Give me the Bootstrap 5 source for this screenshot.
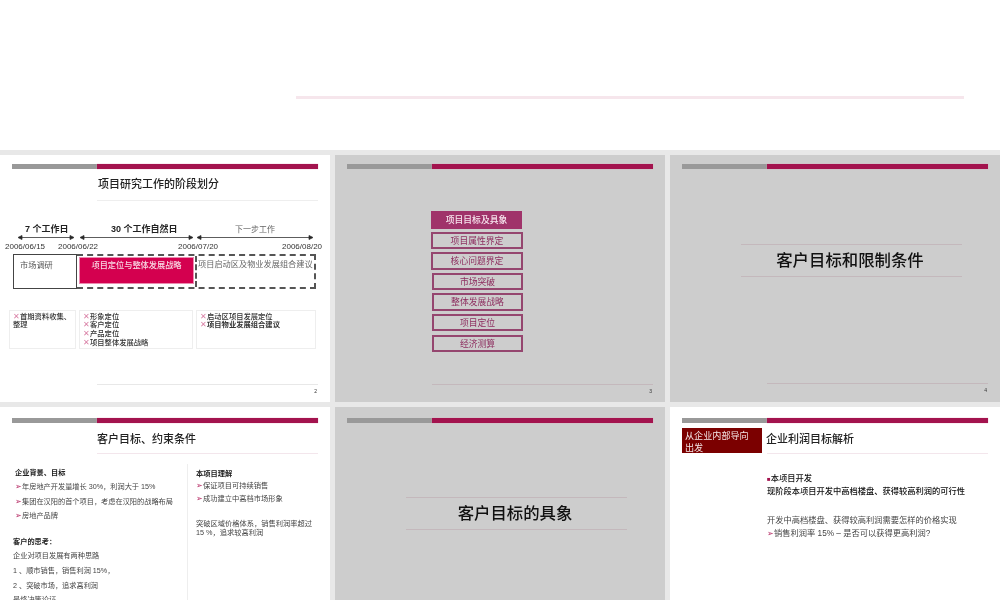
<!DOCTYPE html>
<html lang="zh">
<head>
<meta charset="utf-8">
<title>项目研究</title>
<link rel="stylesheet" href="https://cdn.jsdelivr.net/npm/bootstrap@5.3.0/dist/css/bootstrap.min.css">
<style>
html,body{height:600px;overflow:hidden}
body{background:#e8e8e8;font-family:"Liberation Sans","Noto Sans CJK SC",sans-serif;color:#222;font-size:8px;line-height:1.1}
.topstrip{height:150px;background:#fff;padding:96px 36px 0 296px}
.topline{height:2.5px;background:#f6e6ec}
.deck{display:grid;grid-template-columns:330px 330px 330px;column-gap:5px;row-gap:5px;padding-top:5px}
.sld{height:247px;padding:9px 12px 0;overflow:hidden;background:#fff;filter:blur(.3px)}
.sld.grey{background:#cdcdcd}
.sld.low{padding-top:10.5px;height:193px}
.hbar{height:5px}
.hbar i{display:block;height:100%}
.hbar .g{width:85px;background:#999}
.hbar .r{flex:1;background:#a3134e;box-shadow:0 0 1px #e89ab8}
.ttl{margin-left:85px;height:31.5px;border-bottom:1px solid #eee;font-size:11px;font-weight:500;color:#222;padding-left:1px}
.low .ttl{height:31px;border-bottom-color:#f3e6ec;padding-left:0;padding-top:3px}
.ttlbox{margin:2px 4px 0 -85px;width:80px;height:25.5px;background:#7b0000;color:#f4e6e6;font-size:9.1px;line-height:12px;padding:2px 3px 0;align-self:flex-start;flex:none;font-weight:400;white-space:nowrap}
.tl{margin:0 -12px;width:330px}
.lbl{height:7.5px;margin-top:24.5px;padding-left:25px}
.lbl b{font-size:9px;font-weight:700}
.lb1{width:86px}.lb2{width:124px}.lb3{color:#666;font-size:8px;padding-top:1px}
.arrows{display:block;margin-top:1px}
.dates{height:11px;margin-top:2px;font-size:8px;color:#333;padding-left:5px}
.dates span{width:39px}
.d2{margin-left:14px}.d3{margin-left:81px}.d4{margin-left:65px}
.boxes{margin:0 0 0 13px;height:35px}
.bx1{width:64px;border:1px solid #444;padding:6px 6px;color:#555;font-size:8.2px}
.bx2{width:239px;border:2px dashed #555;border-left:0}
.bx2a{width:118px;padding:1px 1px 3px 2px}
.bx2a div{height:100%;background:#d4004f;border:1px solid #ec8bb0;color:#f8d8e4;text-align:center;font-size:8.2px;font-weight:500;padding-top:3px}
.bx2b{flex:1;border-left:2px dashed #555;color:#666;font-size:8.2px;padding:4px 0 0 1px;white-space:nowrap}
.notes{margin:21px 0 0 9px;height:39px;gap:3px}
.notes>div{border:1px solid #eee;font-size:7.3px;line-height:8.7px;font-weight:500;color:#333;padding:2px 3px;white-space:nowrap}
.n1{width:67px}.n2{width:114px}.n3{width:120px}
.x{color:#d97fa5;font-size:8px;font-weight:400;line-height:1}
.foot{margin:184px 0 0 85px;border-top:1px solid #e8e8e8;text-align:right;font-size:5px;padding:4px 1px 0 0;color:#333}
.foot2{margin-top:35px}
.grey .foot{border-top-color:#c4b8bc}
.menu{margin:42px 0 0 84px;width:92px;gap:3.1px}
.menu div{height:17.5px;border:2px solid #95466f;color:#8e2f60;font-size:8.8px;line-height:14px;text-align:center}
.menu .on{background:#a0336a;color:#f7e5ee;font-weight:500;border-color:#a0336a;width:91px}
.menu .sft{margin-left:1px}
.foot3{margin-top:32px}
.bigt{margin:75px 0 0 59px;width:221px;height:33px;border-top:1px solid #c4b8bc;border-bottom:1px solid #c4b8bc;font-size:16.4px;font-weight:500;color:#111;text-align:center;padding-right:3px}
.bigt5{margin-top:74px}
.foot4{margin-top:106px}
.cols{height:140px;margin-top:10px;margin-left:-12px;width:330px}
.cl{width:188px;border-right:1px solid #eee;padding:5px 0 0 13px;font-size:7.2px;color:#444}
.cr{padding:6px 0 0 8px;font-size:7.25px;color:#444}
.ln{height:14.6px;white-space:nowrap}
.hd{font-weight:700;color:#222}
.ar{color:#b3245f;font-size:8px;line-height:1}
.ind{padding-left:2px}
.cr .ln{height:12.5px}
.q{margin-top:11px;font-weight:700;color:#222}
.pr{margin-top:12px;line-height:9px}
.body6{margin:20px 0 0 85px;font-size:8.25px;color:#444}
.body6 .ln{height:13.6px}
.sq{color:#a3134e;font-size:6px}
.gap6{height:15px}
.bd{font-weight:500;color:#111}
</style>
</head>
<body>
<div class="topstrip"><div class="topline"></div></div>
<div class="deck">

<section class="sld">
 <div class="hbar d-flex"><i class="g"></i><i class="r"></i></div>
 <div class="ttl d-flex align-items-center">项目研究工作的阶段划分</div>
 <div class="tl">
  <div class="lbl d-flex"><b class="lb1">7 个工作日</b><b class="lb2">30 个工作自然日</b><span class="lb3">下一步工作</span></div>
  <svg class="arrows" width="330" height="7" viewBox="0 0 330 7" aria-hidden="true">
   <g stroke="#333" stroke-width=".8" fill="#222">
    <path d="M19 3.5H73"/><path d="M18 3.5l4-2v4zM74 3.5l-4-2v4z"/>
    <path d="M81 3.5H192"/><path d="M80 3.5l4-2v4zM193 3.5l-4-2v4z"/>
    <path d="M198 3.5H312"/><path d="M197 3.5l4-2v4zM313 3.5l-4-2v4z"/>
   </g>
  </svg>
  <div class="dates d-flex"><span>2006/06/15</span><span class="d2">2006/06/22</span><span class="d3">2006/07/20</span><span class="d4">2006/08/20</span></div>
  <div class="boxes d-flex">
   <div class="bx1">市场调研</div>
   <div class="bx2 d-flex">
    <div class="bx2a"><div>项目定位与整体发展战略</div></div>
    <div class="bx2b">项目启动区及物业发展组合建议</div>
   </div>
  </div>
  <div class="notes d-flex">
   <div class="n1"><span class="x">✕</span>首期资料收集、<br>整理</div>
   <div class="n2"><span class="x">✕</span>形象定位<br><span class="x">✕</span>客户定位<br><span class="x">✕</span>产品定位<br><span class="x">✕</span>项目整体发展战略</div>
   <div class="n3"><span class="x">✕</span>启动区项目发展定位<br><span class="x">✕</span><span class="fw-bold">项目物业发展组合建议</span></div>
  </div>
 </div>
 <div class="foot foot2">2</div>
</section>

<section class="sld grey">
 <div class="hbar d-flex"><i class="g"></i><i class="r"></i></div>
 <div class="menu d-flex flex-column">
  <div class="on">项目目标及具象</div>
  <div>项目属性界定</div>
  <div>核心问题界定</div>
  <div class="sft">市场突破</div>
  <div class="sft">整体发展战略</div>
  <div class="sft">项目定位</div>
  <div class="sft">经济测算</div>
 </div>
 <div class="foot foot3">3</div>
</section>

<section class="sld grey">
 <div class="hbar d-flex"><i class="g"></i><i class="r"></i></div>
 <div class="bigt d-flex align-items-center justify-content-center">客户目标和限制条件</div>
 <div class="foot foot4">4</div>
</section>

<section class="sld low">
 <div class="hbar d-flex"><i class="g"></i><i class="r"></i></div>
 <div class="ttl d-flex align-items-center">客户目标、约束条件</div>
 <div class="cols d-flex">
  <div class="cl">
   <div class="ln hd ind">企业背景、目标</div>
   <div class="ln ind"><span class="ar">➢</span>年房地产开发量增长 30%，利润大于 15%</div>
   <div class="ln ind"><span class="ar">➢</span>集团在汉阳的首个项目，考虑在汉阳的战略布局</div>
   <div class="ln ind"><span class="ar">➢</span>房地产品牌</div>
   <div class="ln q">客户的思考：</div>
   <div class="ln">企业对项目发展有两种思路</div>
   <div class="ln">1 、顺市销售，销售利润 15%，</div>
   <div class="ln">2 、突破市场，追求高利润</div>
   <div class="ln">最终决策论证</div>
  </div>
  <div class="cr">
   <div class="ln hd">本项目理解</div>
   <div class="ln"><span class="ar">➢</span>保证项目可持续销售</div>
   <div class="ln"><span class="ar">➢</span>成功建立中高档市场形象</div>
   <div class="pr">突破区域价格体系，销售利润率超过<br>15 %，追求较高利润</div>
  </div>
 </div>
</section>

<section class="sld grey low">
 <div class="hbar d-flex"><i class="g"></i><i class="r"></i></div>
 <div class="bigt bigt5 d-flex align-items-center justify-content-center">客户目标的具象</div>
</section>

<section class="sld low">
 <div class="hbar d-flex"><i class="g"></i><i class="r"></i></div>
 <div class="ttl d-flex align-items-center"><div class="ttlbox">从企业内部导向<br>出发</div>企业利润目标解析</div>
 <div class="body6">
  <div class="ln bd"><span class="sq">■</span>本项目开发</div>
  <div class="ln bd">现阶段本项目开发中高档楼盘、获得较高利润的可行性</div>
  <div class="gap6"></div>
  <div class="ln">开发中高档楼盘、获得较高利润需要怎样的价格实现</div>
  <div class="ln"><span class="ar">➢</span>销售利润率 15% – 是否可以获得更高利润?</div>
 </div>
</section>

</div>
</body>
</html>
